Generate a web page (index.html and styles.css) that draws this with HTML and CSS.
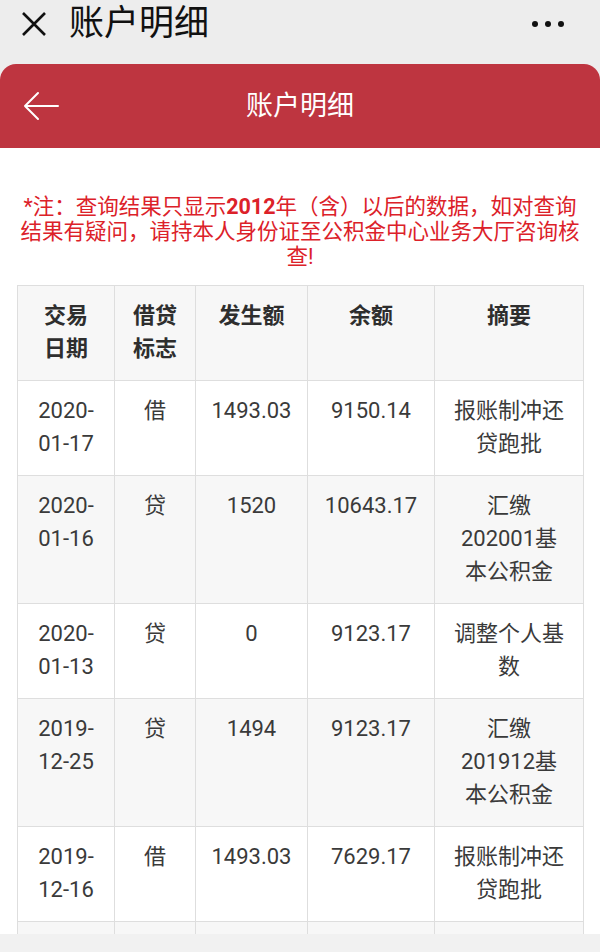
FILE: index.html
```html
<!DOCTYPE html>
<html lang="zh-CN">
<head>
<meta charset="utf-8">
<title>账户明细</title>
<link rel="stylesheet" href="styles.css">
</head>
<body>
<div class="page">
  <div class="topbar">
    <svg class="close" width="26" height="26" viewBox="0 0 26 26"><path d="M2 2 L24 24 M24 2 L2 24" stroke="#111" stroke-width="2.6" fill="none"/></svg>
    <div class="top-title">账户明细</div>
    <svg class="more" width="34" height="8" viewBox="0 0 34 8"><circle cx="4" cy="4" r="3" fill="#111"/><circle cx="17" cy="4" r="3" fill="#111"/><circle cx="30" cy="4" r="3" fill="#111"/></svg>
  </div>
  <div class="content">
    <div class="header">
      <svg class="back" width="36" height="30" viewBox="0 0 36 30"><path d="M35 15 H2 M15 2 L2 15 L15 28" stroke="#fff" stroke-width="2" fill="none" stroke-linecap="round" stroke-linejoin="round"/></svg>
      <div class="header-title">账户明细</div>
    </div>
    <div class="note">
      <div>*注：查询结果只显示<b>2012</b>年（含）以后的数据，如对查询</div>
      <div>结果有疑问，请持本人身份证至公积金中心业务大厅咨询核</div>
      <div>查!</div>
    </div>
    <table class="detail">
      <colgroup>
        <col class="c1"><col class="c2"><col class="c3"><col class="c4"><col class="c5">
      </colgroup>
      <thead>
        <tr><th>交易<br>日期</th><th>借贷<br>标志</th><th>发生额</th><th>余额</th><th>摘要</th></tr>
      </thead>
      <tbody>
        <tr><td>2020-<br>01-17</td><td>借</td><td>1493.03</td><td>9150.14</td><td>报账制冲还<br>贷跑批</td></tr>
        <tr><td>2020-<br>01-16</td><td>贷</td><td>1520</td><td>10643.17</td><td>汇缴<br>202001基<br>本公积金</td></tr>
        <tr><td>2020-<br>01-13</td><td>贷</td><td>0</td><td>9123.17</td><td>调整个人基<br>数</td></tr>
        <tr><td>2019-<br>12-25</td><td>贷</td><td>1494</td><td>9123.17</td><td>汇缴<br>201912基<br>本公积金</td></tr>
        <tr><td>2019-<br>12-16</td><td>借</td><td>1493.03</td><td>7629.17</td><td>报账制冲还<br>贷跑批</td></tr>
        <tr class="partial"><td>&nbsp;</td><td>&nbsp;</td><td>&nbsp;</td><td>&nbsp;</td><td>&nbsp;</td></tr>
      </tbody>
    </table>
  </div>
  <div class="bottombar"></div>
</div>
</body>
</html>
```
FILE: styles.css
```css
* { box-sizing: border-box; }
html, body { margin: 0; padding: 0; }
body {
  font-family: Roboto, "Noto Sans CJK SC", sans-serif;
  background: #ffffff;
}
.page {
  width: 600px;
  height: 952px;
  display: flex;
  flex-direction: column;
  overflow: hidden;
  background: #ededed;
}
.topbar {
  height: 64px;
  flex: none;
  display: flex;
  align-items: center;
  padding: 0 35px 16px 21px;
  background: #ededed;
}
.close { flex: none; }
.top-title {
  margin-left: 22px;
  font-size: 35px;
  color: #111;
  line-height: 40px;
  flex: 1;
}
.more { flex: none; }
.content {
  flex: 1;
  overflow: hidden;
  background: #fff;
  border-radius: 16px 16px 0 0;
}
.header {
  height: 84px;
  background: #be3540;
  display: flex;
  align-items: center;
  position: relative;
  padding-left: 23px;
}
.back { flex: none; }
.header-title {
  position: absolute;
  left: 0;
  right: 0;
  text-align: center;
  font-size: 27px;
  color: #fff;
  line-height: 40px;
}
.note {
  margin-top: 46px;
  text-align: center;
  color: #dc2129;
  font-size: 21.5px;
  line-height: 25px;
  white-space: nowrap;
}
.note b { font-weight: 700; }
.detail {
  margin: 16px 0 0 17px;
  width: 566px;
  border-collapse: collapse;
  table-layout: fixed;
  font-size: 22px;
  color: #3a3a3a;
}
.c1 { width: 97px; }
.c2 { width: 81px; }
.c3 { width: 112px; }
.c4 { width: 127px; }
.c5 { width: 149px; }
.detail th, .detail td {
  border: 1.5px solid #dedede;
  text-align: center;
  vertical-align: top;
  padding: 13px 0 15px;
  line-height: 33px;
  white-space: nowrap;
}
.detail th {
  font-weight: 700;
  color: #2e2e2e;
  background: #f7f7f7;
}
.detail tbody tr:nth-child(even) td { background: #f7f7f7; }
.detail tbody tr:nth-child(odd) td { background: #ffffff; }
.bottombar {
  height: 18px;
  flex: none;
  background: #f1f1f1;
}
```
